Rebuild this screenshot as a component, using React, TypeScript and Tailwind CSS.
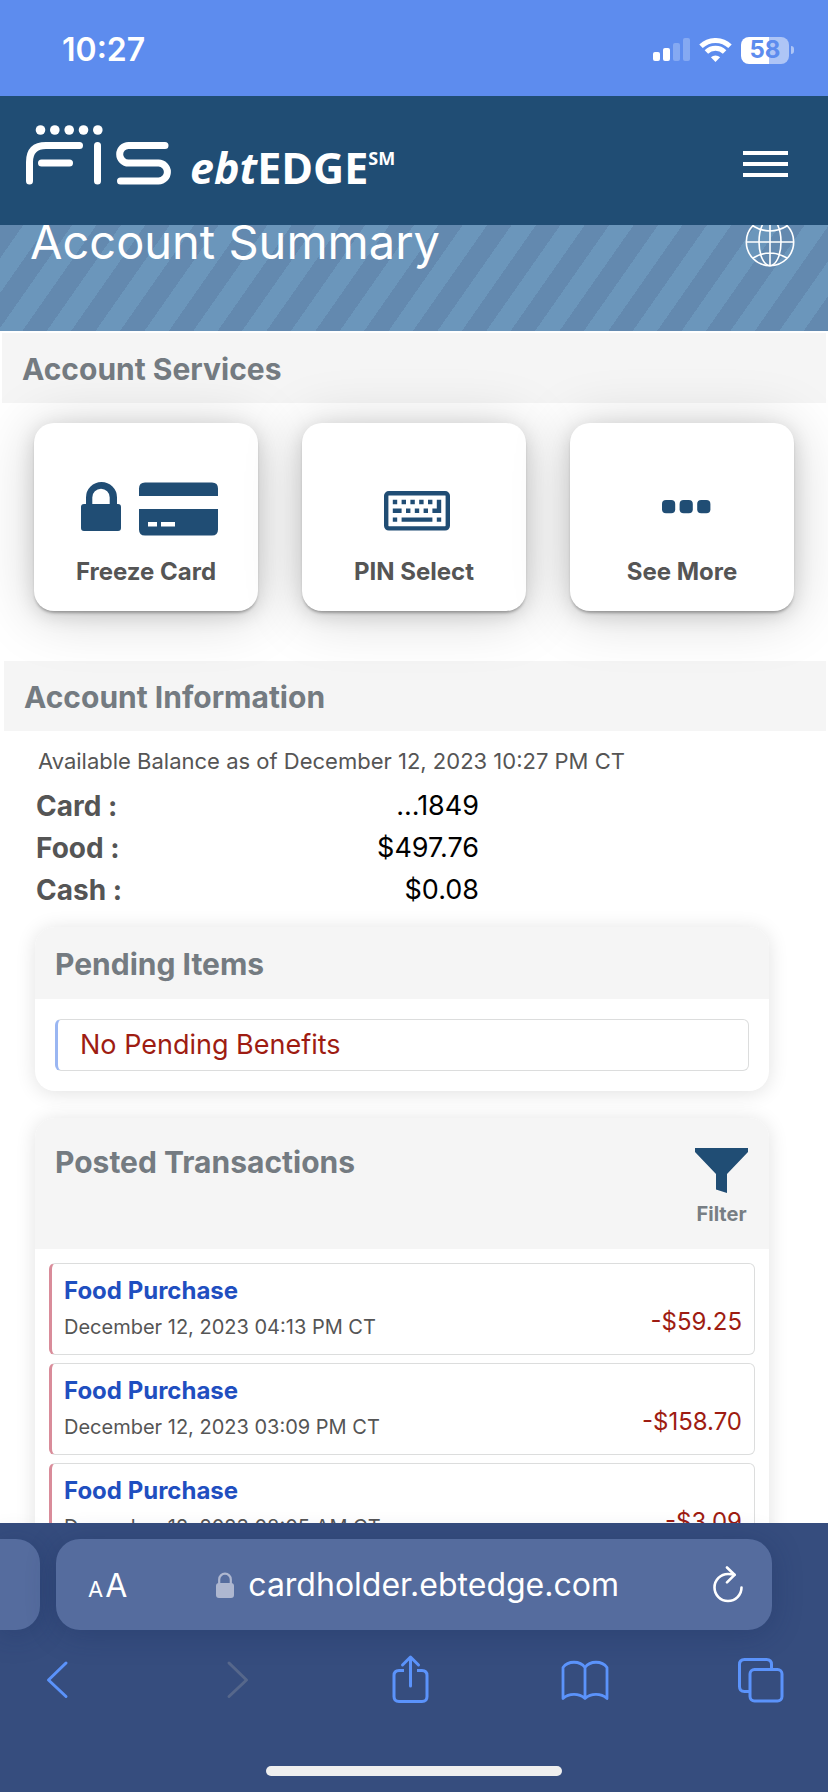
import type { ReactNode } from 'react'

interface Transaction {
  id: number
  title: string
  date: string
  amount: string
}

const balances = [
  { label: 'Card :', value: '...1849' },
  { label: 'Food :', value: '$497.76' },
  { label: 'Cash :', value: '$0.08' },
]

const transactions: Transaction[] = [
  { id: 1, title: 'Food Purchase', date: 'December 12, 2023 04:13 PM CT', amount: '-$59.25' },
  { id: 2, title: 'Food Purchase', date: 'December 12, 2023 03:09 PM CT', amount: '-$158.70' },
  { id: 3, title: 'Food Purchase', date: 'December 12, 2023 08:05 AM CT', amount: '-$3.09' },
]

function StatusBar() {
  return (
    <div className="flex h-24 shrink-0 items-center justify-between bg-[#5d8cee] pt-1 pr-[34px] pl-[62px] text-white">
      <span className="text-[32px] leading-10 font-semibold">10:27</span>
      <div className="flex items-center gap-[9px]">
        <svg width="37" height="24" viewBox="0 0 37 24" fill="currentColor">
          <rect x="0" y="14" width="7" height="9" rx="2" />
          <rect x="10" y="10" width="7" height="13" rx="2" />
          <rect x="20" y="5" width="7" height="18" rx="2" opacity="0.25" />
          <rect x="30" y="0" width="7" height="23" rx="2" opacity="0.25" />
        </svg>
        <svg width="33" height="24" viewBox="0 0 33 24" fill="none" stroke="currentColor" strokeWidth="5">
          <path d="M2 8.3a21 21 0 0 1 29 0" />
          <path d="M7.4 14a13.2 13.2 0 0 1 18.2 0" />
          <path d="M16.5 24l-4.6-4.7a6.8 6.8 0 0 1 9.2 0z" fill="currentColor" stroke="none" />
        </svg>
        <div className="flex items-center gap-[2px]">
          <div className="flex h-[27px] w-12 items-center justify-center rounded-lg bg-linear-to-r from-white from-58% to-[#aec5f6] to-58% text-2xl leading-6 font-bold text-[#5d8cee]">
            58
          </div>
          <div className="h-2 w-[3px] rounded-r-full bg-[#aec5f6]" />
        </div>
      </div>
    </div>
  )
}

function Header() {
  return (
    <header className="flex h-[129px] shrink-0 items-center justify-between bg-[#204d74] pr-10 pb-1 pl-[26px] text-white">
      <a href="#home" className="flex items-end gap-[18px]">
        <svg width="146" height="60" viewBox="26 125 146 60" fill="none" stroke="currentColor" strokeWidth="7" strokeLinecap="round" className="mb-[7px]" aria-label="FIS">
          <g fill="currentColor" stroke="none">
            <circle cx="40.5" cy="130" r="4.8" />
            <circle cx="54.8" cy="130" r="4.8" />
            <circle cx="69.2" cy="130" r="4.8" />
            <circle cx="83.5" cy="130" r="4.8" />
            <circle cx="97.8" cy="130" r="4.8" />
          </g>
          <path d="M29.5 181v-19q0-16.5 16.500-16.500H79.500" />
          <path d="M41.500 163H69.500" />
          <path d="M97.500 145.500V181" />
          <path d="M165 145.500H128.500a8.800 8.800 0 0 0 0 17.600H158.500a8.900 8.900 0 0 1 0 17.800H120.500" />
        </svg>
        <span className="flex items-start font-['Open_Sans'] text-[43px] leading-12 font-bold">
          <i>ebt</i>EDGE
          <span className="text-lg leading-7 font-bold">SM</span>
        </span>
      </a>
      <button type="button" aria-label="Menu" className="mt-[11px] flex w-[45px] flex-col gap-[7px]">
        <span className="h-1 bg-white" />
        <span className="h-1 bg-white" />
        <span className="h-1 bg-white" />
      </button>
    </header>
  )
}

function Banner() {
  return (
    <div className="-mt-4 flex h-[122px] items-start justify-between bg-[repeating-linear-gradient(-55deg,#6389af_0,#6389af_20px,#6b96bb_20px,#6b96bb_40px)] pt-[7px] pr-[33px] pl-[30px] text-white">
      <h1 className="text-[47px] leading-[52px]">Account Summary</h1>
      <button type="button" aria-label="Language" className="mt-px">
        <svg width="50" height="50" viewBox="0 0 50 50" fill="none" stroke="currentColor" strokeWidth="1.6">
          <circle cx="25" cy="25" r="23.700" />
          <ellipse cx="25" cy="25" rx="11" ry="23.700" />
          <path d="M25 1v48M1 25h48M8 9q17 10 34 0M8 41q17-10 34 0" />
        </svg>
      </button>
    </div>
  )
}

function SectionTitle({ children }: { children: ReactNode }) {
  return <h2 className="bg-[#f5f5f5] px-5 pt-[18px] pb-4 text-3xl leading-9 font-bold text-[#747b81]">{children}</h2>
}

function ServiceCard({ label, children }: { label: string; children: ReactNode }) {
  return (
    <button
      type="button"
      className="flex flex-col items-center gap-[18px] rounded-[20px] bg-white pt-[59px] pb-[21px] text-[#204d74] shadow-[0_3px_3px_-1px_rgba(0,0,0,0.3),0_4px_20px_rgba(0,0,0,0.14),0_4px_60px_rgba(0,0,0,0.18)]"
    >
      {children}
      <span className="text-2xl leading-9 font-bold text-[#555]">{label}</span>
    </button>
  )
}

function AccountServices() {
  return (
    <section className="px-[2px] pt-[2px]">
      <SectionTitle>Account Services</SectionTitle>
      <div className="grid grid-cols-3 gap-11 px-8 pt-5 pb-[50px]">
        <ServiceCard label="Freeze Card">
          <svg width="144" height="54" viewBox="-7 0 144 54" fill="currentColor">
            <path d="M3 22H5V15.500a15.500 15.500 0 0 1 31 0V22h1q3 0 3 3v21q0 3-3 3H3q-3 0-3-3V25q0-3 3-3zM11.300 22h17.400v-6.500a8.700 8.700 0 0 0-17.400 0z" />
            <path d="M58 14V6.500q0-6 6-6h67q6 0 6 6V14z" />
            <path fillRule="evenodd" d="M58 27h79v20.500q0 6-6 6H64q-6 0-6-6zM67 40v4.500h9V40zM80 40v4.500h14V40z" />
          </svg>
        </ServiceCard>
        <ServiceCard label="PIN Select">
          <svg width="72" height="54" viewBox="-6 -9 72 54" fill="currentColor">
            <g transform="scale(4.4)">
              <rect x="0.500" y="0.500" width="14" height="8" rx="0.600" fill="none" stroke="currentColor" />
              <path d="M2 2h1v1H2zM4 2h1v1H4zM6 2h1v1H6zM8 2h1v1H8zM10 2h1v1h-1zM12 2h1v3h-2V4h1zM2 4h2v1H2zM5 4h1v1H5zM7 4h1v1H7zM9 4h1v1H9zM2 6h1v1H2zM4 6h7v1H4zM12 6h1v1h-1z" />
            </g>
          </svg>
        </ServiceCard>
        <ServiceCard label="See More">
          <svg width="57" height="54" viewBox="0 0 57 54" fill="currentColor">
            <rect x="8" y="18" width="13.200" height="13.200" rx="4" />
            <rect x="25.600" y="18" width="13.200" height="13.200" rx="4" />
            <rect x="43.200" y="18" width="13.200" height="13.200" rx="4" />
          </svg>
        </ServiceCard>
      </div>
    </section>
  )
}

function AccountInformation() {
  return (
    <section className="pr-[2px] pl-1">
      <SectionTitle>Account Information</SectionTitle>
      <p className="mt-4 px-[34px] text-[22px] leading-7 text-[#555]">
        Available Balance as of December 12, 2023 10:27 PM CT
      </p>
      <table className="mt-[10px] ml-8 w-[443px] text-[27px] leading-[42px]">
        <tbody>
          {balances.map((balance) => (
            <tr key={balance.label}>
              <th scope="row" className="text-left text-[28px] leading-[42px] font-bold text-[#555]">
                {balance.label}
              </th>
              <td className="text-right text-black">{balance.value}</td>
            </tr>
          ))}
        </tbody>
      </table>
    </section>
  )
}

function PendingItems() {
  return (
    <section className="mt-4 mr-[59px] ml-[35px] overflow-hidden rounded-[20px] bg-white shadow-[0_2px_20px_rgba(0,0,0,0.12)]">
      <h2 className="bg-[#f5f5f5] px-5 pt-[19px] pb-[17px] text-3xl leading-9 font-bold text-[#747b81]">Pending Items</h2>
      <div className="p-5">
        <p className="rounded-md border border-l-3 border-[#dcdddd] border-l-[#9ab6f2] px-[22px] text-[27px] leading-[50px] text-[#9e1c12]">
          No Pending Benefits
        </p>
      </div>
    </section>
  )
}

function PostedTransactions() {
  return (
    <section className="mt-[27px] mr-[59px] ml-[35px] overflow-hidden rounded-[20px] bg-white shadow-[0_2px_20px_rgba(0,0,0,0.12)]">
      <div className="flex h-[131px] items-start justify-between bg-[#f5f5f5] pr-[21px] pl-5 pt-[26px]">
        <h2 className="text-3xl leading-9 font-bold text-[#747b81]">Posted Transactions</h2>
        <button type="button" className="mt-1 flex flex-col items-center gap-[7px] text-xl leading-7 font-bold text-[#777e84]">
          <svg width="53" height="45" viewBox="0 0 53 45" fill="#204d74">
            <path d="M0 0h53v4L32 26v19l-11-3.500V26L0 4z" />
          </svg>
          Filter
        </button>
      </div>
      <ul className="flex flex-col gap-2 px-[14px] py-[14px]">
        {transactions.map((transaction) => (
          <li
            key={transaction.id}
            className="flex h-[92px] items-center justify-between rounded-md border border-l-3 border-[#dcdddd] border-l-[#d98c9a] px-3"
          >
            <div>
              <a href="#transaction" className="block text-2xl leading-9 font-bold text-[#1f4fc0]">
                {transaction.title}
              </a>
              <p className="text-xl leading-9 text-[#555]">{transaction.date}</p>
            </div>
            <span className="mt-[26px] text-2xl leading-8 text-[#9e1c12]">{transaction.amount}</span>
          </li>
        ))}
      </ul>
    </section>
  )
}

function BrowserBar() {
  return (
    <footer className="flex h-[269px] shrink-0 flex-col bg-[#364d7e] pt-4">
      <div className="flex h-[91px] shrink-0 gap-4">
        <div className="w-10 rounded-r-3xl bg-[#556c9e] shadow-[0_4px_30px_rgba(20,40,90,0.3)]" />
        <div className="mr-14 flex flex-1 items-center justify-between rounded-3xl bg-[#556c9e] pr-7 pl-8 text-white shadow-[0_4px_30px_rgba(20,40,90,0.3)]">
          <button type="button" aria-label="Page settings" className="flex items-baseline gap-[2px] pt-[6px] leading-10">
            <span className="text-[22px]">A</span>
            <span className="text-[32px]">A</span>
          </button>
          <label className="mr-1 flex items-center gap-[14px]">
            <svg width="18" height="26" viewBox="0 0 18 26" aria-label="Secure" className="text-[#aeb7d0]">
              <rect y="11" width="18" height="15" rx="3" fill="currentColor" />
              <path d="M3.200 12V7.500a5.800 5.800 0 0 1 11.600 0V12" fill="none" stroke="currentColor" strokeWidth="2.200" />
            </svg>
            <input readOnly aria-label="Address" value="cardholder.ebtedge.com" className="field-sizing-content bg-transparent text-[32px] leading-10" />
          </label>
          <button type="button" aria-label="Reload">
            <svg width="32" height="38" viewBox="0 0 32 38" fill="none" stroke="currentColor" strokeWidth="2.600" strokeLinecap="round" strokeLinejoin="round">
              <path d="M29.500 21.500a13.500 13.500 0 1 1-13.500-13.500q3.500 0 6.500.8" />
              <path d="M15 1.500l7.500 7.300-7.500 7.500" />
            </svg>
          </button>
        </div>
      </div>
      <nav className="flex items-center justify-between pt-6 pr-[43px] pl-[33px] text-[#5b93fb]">
        <button type="button" aria-label="Back">
          <svg width="48" height="50" viewBox="0 0 48 50" fill="none" stroke="currentColor" strokeWidth="3" strokeLinecap="round" strokeLinejoin="round">
            <path d="M33 9L15.500 26 33 42.500" />
          </svg>
        </button>
        <button type="button" aria-label="Forward" disabled className="text-[#56678b]">
          <svg width="48" height="50" viewBox="0 0 48 50" fill="none" stroke="currentColor" strokeWidth="3" strokeLinecap="round" strokeLinejoin="round">
            <path d="M20 9l17.500 17L20 42.500" />
          </svg>
        </button>
        <button type="button" aria-label="Share">
          <svg width="48" height="50" viewBox="0 0 48 50" fill="none" stroke="currentColor" strokeWidth="3" strokeLinecap="round" strokeLinejoin="round">
            <path d="M19 16.500h-5q-5 0-5 5V42.500q0 5 5 5h23q5 0 5-5V21.500q0-5-5-5h-5" strokeLinecap="butt" />
            <path d="M25.500 32V3M17.500 11l8-8 8 8" />
          </svg>
        </button>
        <button type="button" aria-label="Bookmarks">
          <svg width="48" height="50" viewBox="0 0 48 50" fill="none" stroke="currentColor" strokeWidth="2.800" strokeLinejoin="round">
            <path d="M24 13.500C19 6.500 7 6.500 2 13.500V44.500C8 39 18 39 24 44.500 30 39 40 39 46 44.500V13.500C41 6.500 29 6.500 24 13.500zM24 13.500v31" />
          </svg>
        </button>
        <button type="button" aria-label="Tabs">
          <svg width="48" height="50" viewBox="0 0 48 50" fill="none" stroke="currentColor" strokeWidth="3">
            <rect x="13" y="15.500" width="32" height="31.500" rx="4.500" />
            <path d="M12 37.500H7.500q-5 0-5-5V10.500q0-5 5-5h22q5 0 5 5v4" />
          </svg>
        </button>
      </nav>
      <div className="mx-auto mt-auto mb-4 h-[10px] w-[296px] rounded-full bg-[#efefef]" />
    </footer>
  )
}

export default function App() {
  return (
    <div className="flex h-screen flex-col bg-white font-['Inter','Liberation_Sans',sans-serif]">
      <StatusBar />
      <Header />
      <main className="min-h-0 flex-1 overflow-hidden">
        <Banner />
        <AccountServices />
        <AccountInformation />
        <PendingItems />
        <PostedTransactions />
      </main>
      <BrowserBar />
    </div>
  )
}
